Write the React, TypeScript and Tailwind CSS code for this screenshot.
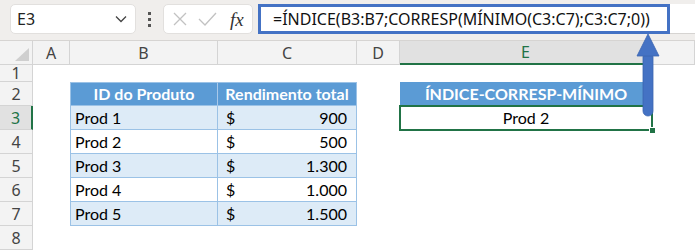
import React from 'react';

const products = [
  { id: 'Prod 1', val: '900' },
  { id: 'Prod 2', val: '500' },
  { id: 'Prod 3', val: '1.300' },
  { id: 'Prod 4', val: '1.000' },
  { id: 'Prod 5', val: '1.500' },
];

const cols = ['A', 'B', 'C', 'D', 'E', ''];

const RowHead = ({ n, active }: { n: number; active?: boolean }) => (
  <div
    className={
      active
        ? 'flex items-center justify-center bg-[#e1e1e1] text-[#217346] border-b border-[#d4d4d4] border-r-2 border-r-[#217346]'
        : 'flex items-center justify-center bg-[#f3f3f3] text-[#444] border-b border-r border-[#d4d4d4]'
    }
  >
    {n}
  </div>
);

const App: React.FC = () => {
  return (
    <div
      className="relative w-[695px] h-[251px] overflow-hidden bg-white"
      style={{ fontFamily: '"Noto Sans", "Open Sans", sans-serif' }}
    >
      {/* formula toolbar */}
      <div className="h-[41px] bg-[#f0eeec] border-b border-[#d6d4d2] flex items-start pt-[4px] pl-[10px]">
        <div className="w-[126px] h-[30px] bg-white rounded-[5px] border border-[#e2e0de] flex items-center justify-between pl-[6px] pr-[8px] text-[16px] text-[#222]">
          <span>E3</span>
          <svg width="12" height="8" viewBox="0 0 12 8">
            <path d="M1 1.5 L6 6.5 L11 1.5" fill="none" stroke="#444" strokeWidth="1.3" />
          </svg>
        </div>
        <div className="w-[27px] h-[30px] flex flex-col items-center justify-center gap-[3px]">
          <div className="w-[3px] h-[3px] bg-[#555]" />
          <div className="w-[3px] h-[3px] bg-[#555]" />
          <div className="w-[3px] h-[3px] bg-[#555]" />
        </div>
        <div className="w-[90px] h-[30px] bg-white rounded-[5px] border border-[#e2e0de] flex items-center pl-[8px] gap-[9px]">
          <svg width="16" height="16" viewBox="0 0 16 16">
            <path d="M2 2 L14 14 M14 2 L2 14" stroke="#c2c2c2" strokeWidth="1.3" />
          </svg>
          <svg width="20" height="16" viewBox="0 0 20 16">
            <path d="M2 8 L8 14 L19 2" fill="none" stroke="#c2c2c2" strokeWidth="1.3" />
          </svg>
          <span
            className="text-[19px] italic text-[#333] leading-none ml-[4px]"
            style={{ fontFamily: '"Liberation Serif", serif' }}
          >
            fx
          </span>
        </div>
        <div className="flex-1 ml-[5px] h-[30px] bg-white border-b border-[#d6d4d2]">
          <div className="w-[412px] h-[30px] border-[3px] border-[#4472c4] flex items-center pl-[12px] text-[16px] text-[#111]">
            =ÍNDICE(B3:B7;CORRESP(MÍNIMO(C3:C7);C3:C7;0))
          </div>
        </div>
      </div>

      {/* sheet */}
      <div className="grid grid-cols-[33px_37px_148px_139px_43px_252px_1fr] grid-rows-[24px_17px_repeat(7,24px)] text-[16px]">
        {/* column headers */}
        <div className="relative bg-[#f3f3f3] border-b border-r border-[#d4d4d4]">
          <div className="absolute right-[3px] bottom-[3px] w-0 h-0 border-l-[14px] border-l-transparent border-b-[13px] border-b-[#cfcfcf]" />
        </div>
        {cols.map((c, i) =>
          c === 'E' ? (
            <div key={i} className="flex items-center justify-center bg-[#e1e1e1] text-[#217346] border-r border-[#d4d4d4] border-b-2 border-b-[#217346]">
              {c}
            </div>
          ) : (
            <div key={i} className="flex items-center justify-center bg-[#f3f3f3] text-[#444] border-b border-r border-[#d4d4d4]">
              {c}
            </div>
          )
        )}

        {/* row 1 */}
        <RowHead n={1} />
        <div className="col-span-6" />

        {/* row 2 */}
        <RowHead n={2} />
        <div />
        <div
          className="flex items-center justify-center bg-[#5b9bd5] text-white font-bold text-[16px] border-t border-l border-b border-r border-[#9bc2e6] border-r-[#a9c9ea]"
          style={{ fontFamily: 'Lato, sans-serif' }}
        >
          ID do Produto
        </div>
        <div
          className="flex items-center justify-center bg-[#5b9bd5] text-white font-bold text-[16px] border-t border-b border-r border-[#9bc2e6]"
          style={{ fontFamily: 'Lato, sans-serif' }}
        >
          Rendimento total
        </div>
        <div />
        <div
          className="flex items-center justify-center bg-[#5b9bd5] text-white font-bold text-[16px]"
          style={{ fontFamily: 'Lato, sans-serif' }}
        >
          ÍNDICE-CORRESP-MÍNIMO
        </div>
        <div />

        {/* rows 3-7 */}
        {products.map((p, i) => {
          const fill = i % 2 === 0 ? 'bg-[#ddebf7]' : 'bg-white';
          return (
            <React.Fragment key={p.id}>
              <RowHead n={i + 3} active={i === 0} />
              <div />
              <div
                className={`${fill} flex items-center pl-[4px] text-[16px] text-black border-l border-r border-b border-[#9bc2e6]`}
                style={{ fontFamily: 'Lato, sans-serif' }}
              >
                {p.id}
              </div>
              <div
                className={`${fill} flex items-center justify-between pl-[8px] pr-[9px] text-[16px] text-black border-r border-b border-[#9bc2e6]`}
                style={{ fontFamily: 'Lato, sans-serif' }}
              >
                <span>$</span>
                <span>{p.val}</span>
              </div>
              <div />
              {i === 0 ? (
                <div
                  className="relative flex items-center justify-center text-[16px] text-black"
                  style={{ fontFamily: 'Lato, sans-serif' }}
                >
                  <div className="absolute -top-[1px] -left-[1px] -right-[1px] -bottom-[1px] border-2 border-[#217346]" />
                  <div className="absolute -right-[4px] -bottom-[4px] w-[7px] h-[7px] bg-[#217346] border border-white" />
                  Prod 2
                </div>
              ) : (
                <div />
              )}
              <div />
            </React.Fragment>
          );
        })}

        {/* row 8 */}
        <RowHead n={8} />
        <div className="col-span-6" />
      </div>

      {/* annotation arrow */}
      <svg
        className="absolute left-[630px] top-[30px]"
        width="36"
        height="92"
        viewBox="0 0 36 92"
      >
        <rect x="13" y="22" width="10" height="64" rx="5" fill="#4472c4" stroke="#3a64b0" strokeWidth="0.8" />
        <polygon points="18,4 7,26 29,26" fill="#4472c4" stroke="#3a64b0" strokeWidth="0.8" />
      </svg>
    </div>
  );
};

export default App;
